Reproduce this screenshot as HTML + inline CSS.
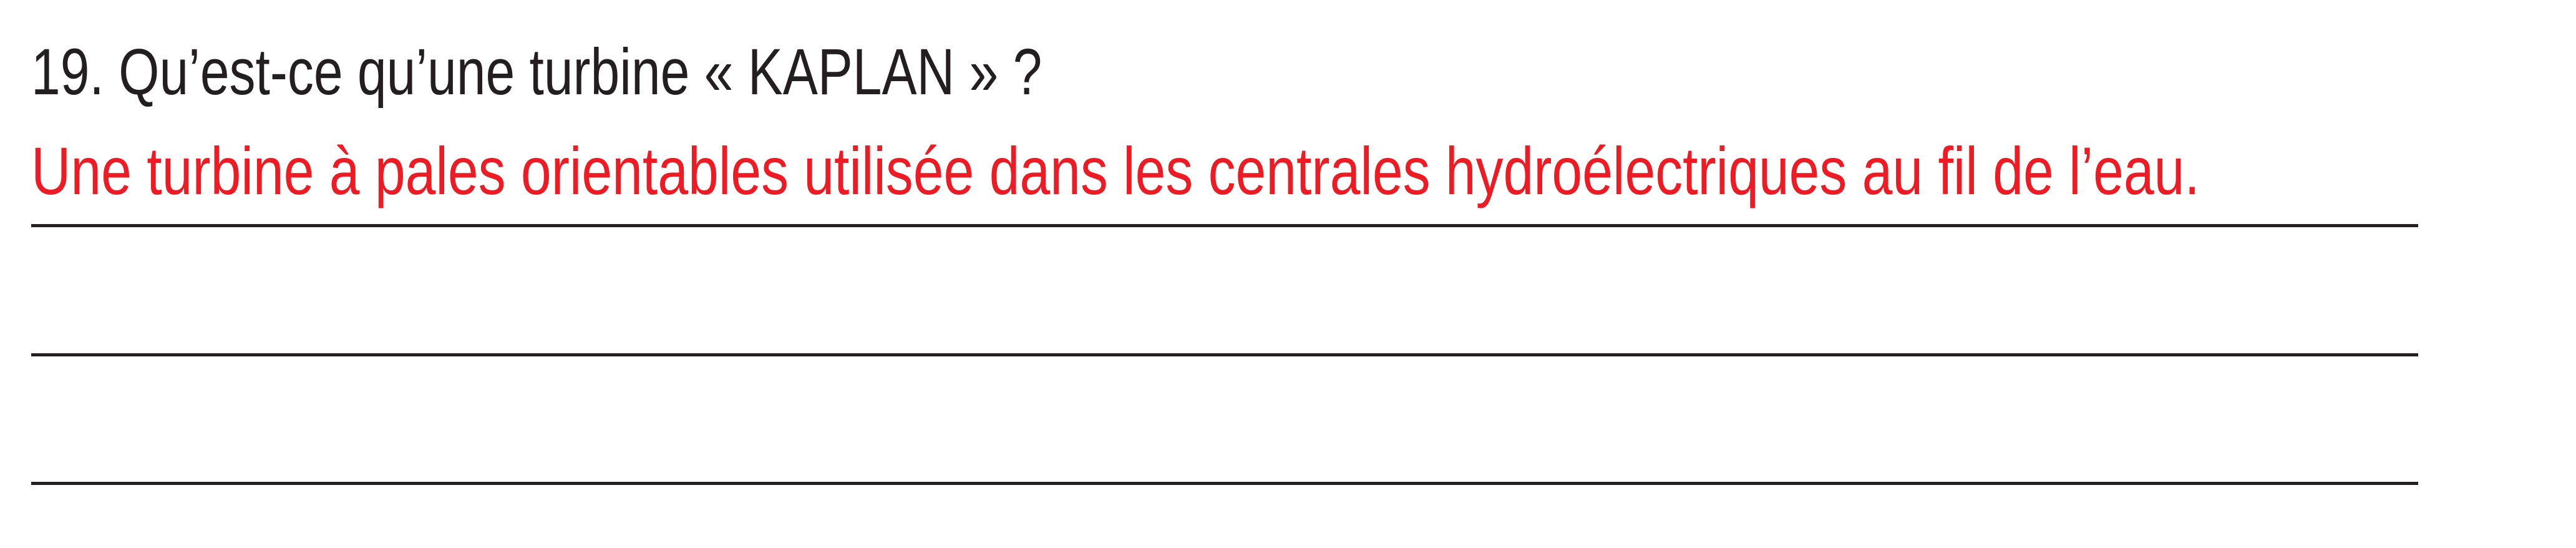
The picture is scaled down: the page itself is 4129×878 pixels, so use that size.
<!DOCTYPE html>
<html><head><meta charset="utf-8"><style>
html,body{margin:0;padding:0;background:#fff;width:4129px;height:878px;overflow:hidden;position:relative}
.t{position:absolute;left:50px;white-space:nowrap;font-family:"Liberation Sans",sans-serif;line-height:1;transform-origin:0 0}
.l{position:absolute;left:50px;width:3826px;height:5px;background:#231f20}
</style></head><body>
<div class="t" style="top:63px;font-size:105px;color:#231f20;transform:scaleX(0.80)">19. Qu’est-ce qu’une turbine « KAPLAN » ?</div>
<div class="t" style="top:220px;font-size:108px;color:#ed1c24;transform:scaleX(0.812)">Une turbine à pales orientables utilisée dans les centrales hydroélectriques au fil de l’eau.</div>
<div class="l" style="top:359px"></div>
<div class="l" style="top:566px"></div>
<div class="l" style="top:772px"></div>
</body></html>
